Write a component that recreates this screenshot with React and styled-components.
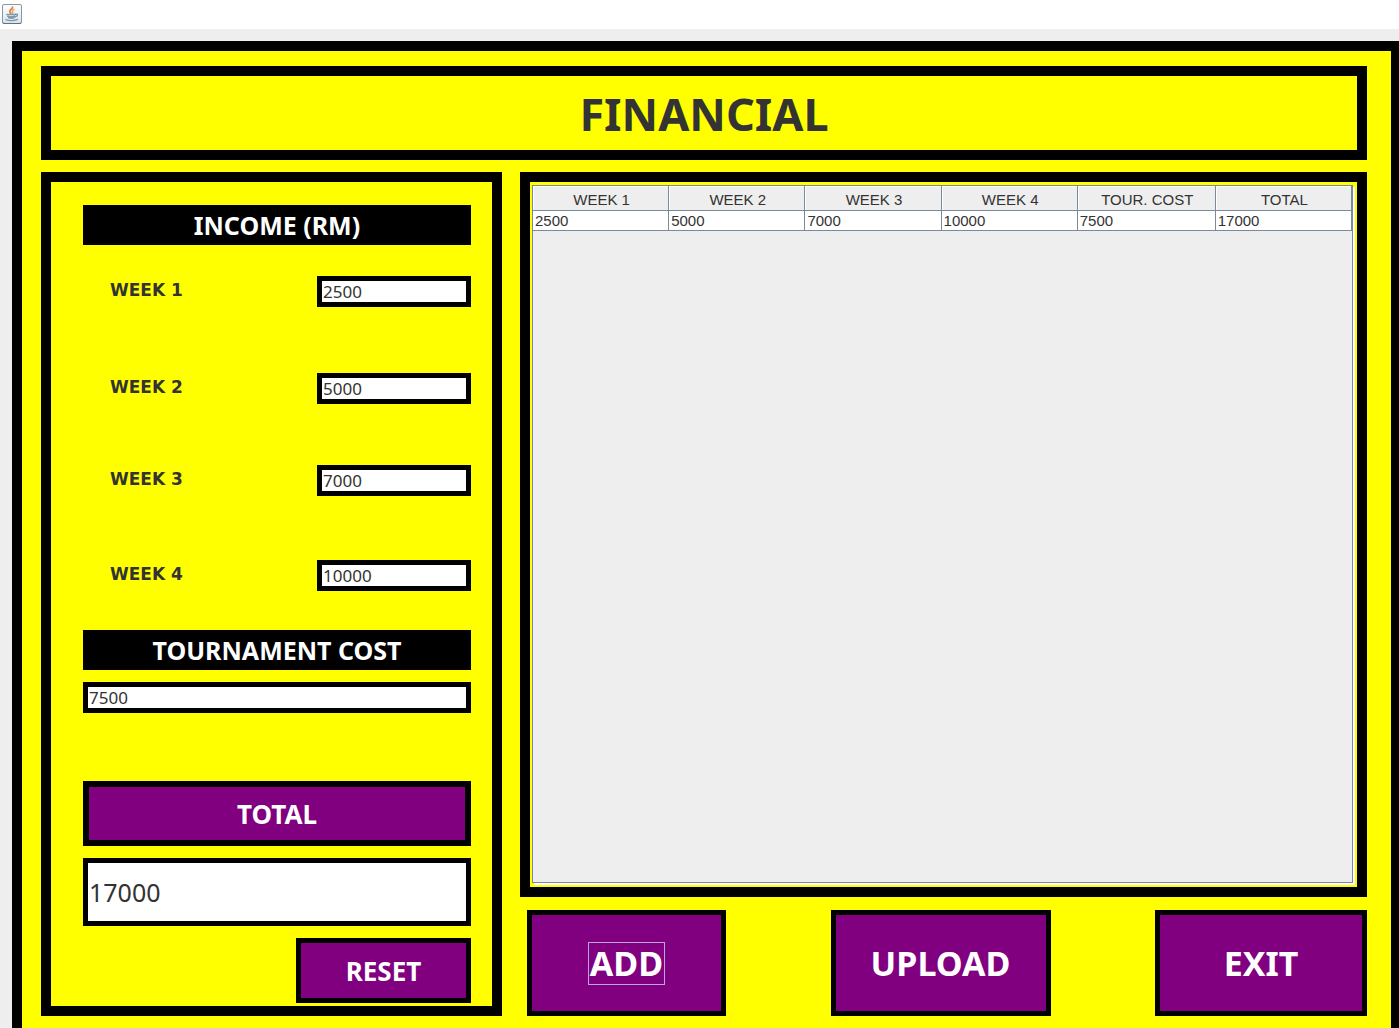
import React, { useState } from "react";
import styled, { createGlobalStyle } from "styled-components";

const GlobalStyle = createGlobalStyle`
  *, *::before, *::after { box-sizing: border-box; }
  body {
    margin: 0;
    background: #eeeeee;
    color: #333333;
    font-family: "Noto Sans", "Open Sans", sans-serif;
  }
  button, input { font-family: inherit; color: inherit; margin: 0; }
`;

const TitleBar = styled.header`
  height: 29px;
  padding: 4px 2px;
  background: #ffffff;
`;

const AppIcon = styled.svg`
  display: block;
  width: 20px;
  height: 20px;
`;

const Frame = styled.main`
  display: flex;
  flex-direction: column;
  gap: 12px;
  margin: 12px 0 0 12px;
  padding: 15px 24px 12px 19px;
  border: solid #000000;
  border-width: 10px 8px 0 10px;
  background: #ffff00;
`;

const Title = styled.h1`
  margin: 0;
  padding-top: 2px;
  border: 10px solid #000000;
  font-size: 45px;
  font-weight: 700;
  line-height: 72px;
  text-align: center;
`;

const Columns = styled.div`
  display: flex;
  gap: 18px;
`;

const Form = styled.form`
  display: flex;
  flex-direction: column;
  flex: 0 0 461px;
  padding: 23px 21px 3px 32px;
  border: 10px solid #000000;
`;

const Banner = styled.h2`
  margin: 0;
  background: #000000;
  color: #ffffff;
  font-size: 25px;
  font-weight: 700;
  line-height: 40px;
  text-align: center;
`;

const Weeks = styled.div`
  display: grid;
  grid-template-rows: 97px 92px 95px 31px;
  margin: 31px 0 39px;
`;

const WeekRow = styled.div`
  display: flex;
  align-items: flex-start;
  justify-content: space-between;
  padding-left: 27px;
`;

const WeekLabel = styled.label`
  font-family: "DejaVu Sans", Verdana, sans-serif;
  font-size: 17px;
  font-weight: 700;
  line-height: 28px;
`;

const Field = styled.input`
  display: block;
  width: ${(p) => (p.$wide ? "100%" : "154px")};
  height: ${(p) => (p.$large ? "68px" : "31px")};
  padding: 0 1px;
  border: 5px solid #000000;
  border-radius: 0;
  background: #ffffff;
  font-size: ${(p) => (p.$large ? "25px" : "17px")};
  outline: none;
`;

const FormTail = styled.div`
  display: flex;
  flex-direction: column;
  gap: 12px;
  margin-top: 12px;
`;

const Button = styled.button`
  padding: 0;
  border: ${(p) => (p.$thick ? "6px" : "5px")} solid #000000;
  border-radius: 0;
  background: #800080;
  color: #ffffff;
  font-size: ${(p) => (p.$large ? "34px" : "26px")};
  font-weight: 700;
  width: ${(p) => p.$width};
  height: ${(p) => (p.$large ? "106px" : "65px")};
`;

const TotalButton = styled(Button)`
  margin-top: 56px;
`;

const ResetButton = styled(Button)`
  align-self: flex-end;
`;

const Side = styled.section`
  display: flex;
  flex-direction: column;
  flex: 1;
  gap: 13px;
  min-width: 0;
`;

const TablePanel = styled.div`
  display: flex;
  flex: 1;
  padding: 3px 2px 2px;
  border: 10px solid #000000;
`;

const ScrollPane = styled.div`
  flex: 1;
  border: 1px solid #7a8a99;
  box-shadow: 2px 2px 0 #ffffff;
  margin: 0 2px 2px 0;
  background: #eeeeee;
`;

const Table = styled.table`
  width: 100%;
  table-layout: fixed;
  border-collapse: separate;
  border-spacing: 0;
  font-family: "Liberation Sans", Arial, sans-serif;
  font-size: 15px;
`;

const CostColumn = styled.col`
  width: 138px;
`;

const HeadCell = styled.th`
  height: 25px;
  padding: 3px 0 0 2px;
  border-right: 1px solid #7a8a99;
  border-bottom: 1px solid #7a8a99;
  box-shadow: inset 1px 1px 0 #ffffff;
  font-weight: 400;
  line-height: 21px;
  text-align: center;
`;

const Cell = styled.td`
  height: 20px;
  padding: 0 2px;
  border-right: 1px solid #7a8a99;
  border-bottom: 1px solid #7a8a99;
  background: #ffffff;
  line-height: 19px;
`;

const Actions = styled.div`
  display: flex;
  justify-content: space-between;
  padding-left: 7px;
`;

const FocusBox = styled.span`
  display: inline-block;
  padding: 0 1px;
  border: 1px solid #b8a6dc;
  line-height: 41px;
`;

function JavaIcon() {
  return (
    <AppIcon viewBox="0 0 20 20" role="img" aria-label="Java">
      <defs>
        <linearGradient id="tile" x1="0" y1="0" x2="0" y2="1">
          <stop offset="0" stopColor="#ffffff" />
          <stop offset="1" stopColor="#dde1e6" />
        </linearGradient>
      </defs>
      <rect x="0.5" y="0.5" width="19" height="19" rx="1.5" fill="url(#tile)" stroke="#7f9bb0" strokeWidth="1" />
      <path d="M1 18.5v.2a.8.8 0 0 0 .8.8h16.400a.8.8 0 0 0 .8-.8v-.2" fill="none" stroke="#4f7590" strokeWidth="1" />
      <g fill="none" strokeLinecap="round">
        <path d="M10.500 3.200c.6 1.700-3 2.300-2.700 4.100.1.900 1.200 1.300 1 2" stroke="#e8833a" strokeWidth="1.800" />
        <path d="M12 5.500c-1.600.7-2.200 1.400-1.400 2.200.4.500.2 1-.3 1.400" stroke="#f0a56c" strokeWidth="1.500" />
        <path d="M5 10.500h8.500M5.800 12.200c1.900.6 5.100.6 7 0M6.800 13.800c1.500.5 3.800.5 5.200 0" stroke="#7d9ab0" strokeWidth="1.600" />
        <path d="M13.600 10.200c2.600-.6 2.500 2-.3 2.600" stroke="#6d8ea6" strokeWidth="1.300" />
        <path d="M4 15.700c2.700 1.300 8.700 1.200 11.500-.3" stroke="#7f9bb0" strokeWidth="1.400" />
      </g>
    </AppIcon>
  );
}

const START = ["2500", "5000", "7000", "10000"];
const COLUMNS = ["WEEK 1", "WEEK 2", "WEEK 3", "WEEK 4", "TOUR. COST", "TOTAL"];

export default function App() {
  const [weeks, setWeeks] = useState(START);
  const [cost, setCost] = useState("7500");
  const [total, setTotal] = useState("17000");
  const [rows, setRows] = useState([[...START, "7500", "17000"]]);

  const setWeek = (index, value) =>
    setWeeks(weeks.map((week, i) => (i === index ? value : week)));

  const computeTotal = () =>
    setTotal(String(weeks.reduce((sum, week) => sum + Number(week), 0) - Number(cost)));

  const reset = () => {
    setWeeks(["", "", "", ""]);
    setCost("");
    setTotal("");
  };

  return (
    <>
      <GlobalStyle />
      <TitleBar>
        <JavaIcon />
      </TitleBar>
      <Frame>
        <Title>FINANCIAL</Title>
        <Columns>
          <Form onSubmit={(e) => e.preventDefault()}>
            <Banner>INCOME (RM)</Banner>
            <Weeks>
              {weeks.map((week, i) => (
                <WeekRow key={i}>
                  <WeekLabel htmlFor={`week-${i}`}>WEEK {i + 1}</WeekLabel>
                  <Field id={`week-${i}`} value={week} onChange={(e) => setWeek(i, e.target.value)} />
                </WeekRow>
              ))}
            </Weeks>
            <Banner as="label" htmlFor="cost">TOURNAMENT COST</Banner>
            <FormTail>
              <Field id="cost" $wide value={cost} onChange={(e) => setCost(e.target.value)} />
              <TotalButton type="button" $thick $width="100%" onClick={computeTotal}>TOTAL</TotalButton>
              <Field aria-label="Total" $wide $large value={total} readOnly />
              <ResetButton type="button" $width="175px" onClick={reset}>RESET</ResetButton>
            </FormTail>
          </Form>
          <Side>
            <TablePanel>
              <ScrollPane>
                <Table>
                  <colgroup>
                    <col span={4} />
                    <CostColumn />
                    <col />
                  </colgroup>
                  <thead>
                    <tr>
                      {COLUMNS.map((name) => (
                        <HeadCell key={name} scope="col">{name}</HeadCell>
                      ))}
                    </tr>
                  </thead>
                  <tbody>
                    {rows.map((row, r) => (
                      <tr key={r}>
                        {row.map((value, c) => (
                          <Cell key={c}>{value}</Cell>
                        ))}
                      </tr>
                    ))}
                  </tbody>
                </Table>
              </ScrollPane>
            </TablePanel>
            <Actions>
              <Button type="button" $large $width="199px" onClick={() => setRows([...rows, [...weeks, cost, total]])}>
                <FocusBox>ADD</FocusBox>
              </Button>
              <Button type="button" $large $width="220px">UPLOAD</Button>
              <Button type="button" $large $width="212px">EXIT</Button>
            </Actions>
          </Side>
        </Columns>
      </Frame>
    </>
  );
}
